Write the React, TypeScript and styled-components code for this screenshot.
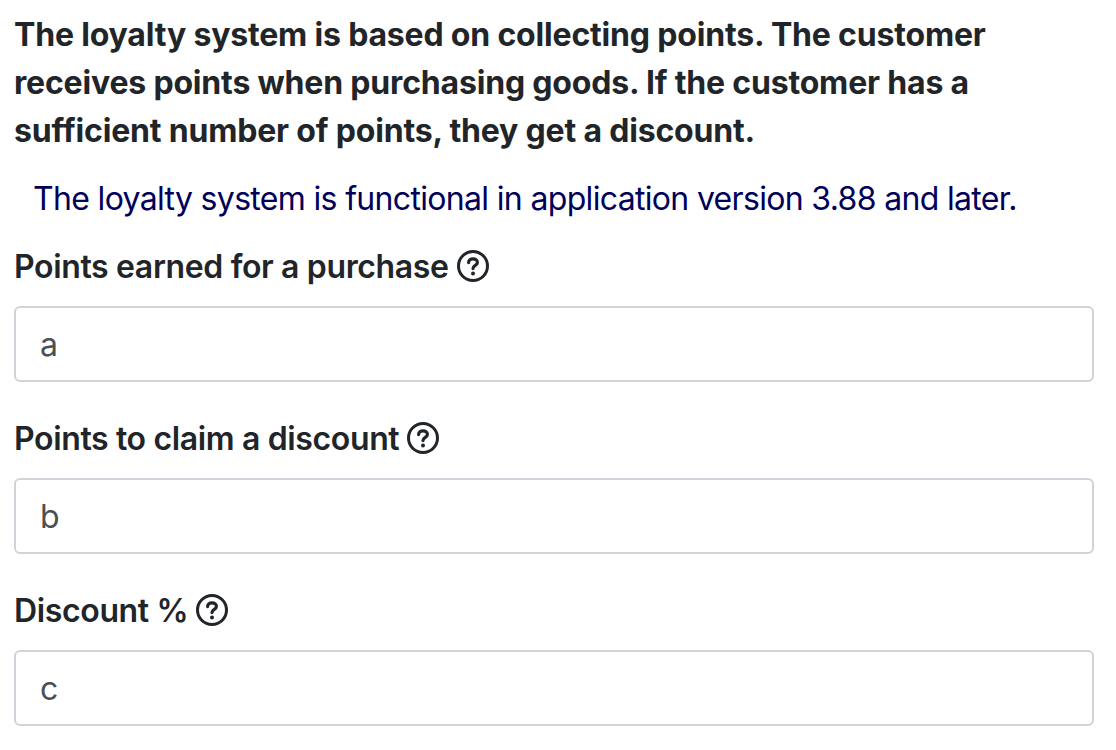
import React from "react";
import styled, { createGlobalStyle } from "styled-components";

const GlobalStyle = createGlobalStyle`
  html, body {
    margin: 0;
    padding: 0;
    background: #fff;
    font-family: Inter, "Liberation Sans", Arial, sans-serif;
    color: #212529;
  }
  * { box-sizing: border-box; }
`;

const Page = styled.div`
  width: 1116px;
  height: 750px;
  overflow: hidden;
  padding: 11px 22px 0 14px;
`;

const Intro = styled.p`
  margin: 0;
  font-size: 32px;
  line-height: 48px;
  font-weight: 700;
  letter-spacing: -0.18px;
  color: #212529;
`;

const Notice = styled.div`
  margin-top: 20px;
  padding-left: 19px;
  font-size: 32px;
  line-height: 48px;
  letter-spacing: -0.67px;
  color: #00005a;
`;

const Field = styled.div`
  margin-bottom: 32px;
`;

const Label = styled.label`
  display: flex;
  align-items: center;
  gap: 7px;
  height: 48px;
  margin-top: 19px;
  font-size: 32px;
  font-weight: 600;
  letter-spacing: -0.36px;
  color: #212529;
`;

const Input = styled.input`
  display: block;
  width: 100%;
  height: 76px;
  margin-top: 16px;
  padding: 0 24px;
  border: 2px solid #ced4da;
  border-radius: 6px;
  background: #fff;
  font-family: inherit;
  font-size: 32px;
  letter-spacing: -0.4px;
  color: #495057;
  outline: none;
`;

function HelpIcon(): JSX.Element {
  return (
    <svg width="34" height="34" viewBox="0 0 34 34" fill="none">
      <circle cx="17" cy="17" r="14.5" stroke="#212529" strokeWidth="3" />
      <path
        d="M12.6 13.6c0-2.4 2-3.7 4.4-3.7s4.4 1.3 4.4 3.5c0 3-4.4 3-4.4 6.2"
        stroke="#212529"
        strokeWidth="3.2"
        strokeLinecap="round"
      />
      <circle cx="17" cy="24.6" r="2" fill="#212529" />
    </svg>
  );
}

const fields = [
  { label: "Points earned for a purchase", value: "a" },
  { label: "Points to claim a discount", value: "b" },
  { label: "Discount %", value: "c" },
];

export default function App(): JSX.Element {
  return (
    <Page>
      <GlobalStyle />
      <Intro>
        The loyalty system is based on collecting points. The customer receives
        points when purchasing goods. If the customer has a sufficient number of
        points, they get a discount.
      </Intro>
      <Notice>The loyalty system is functional in application version 3.88 and later.</Notice>
      {fields.map((field) => (
        <Field key={field.label}>
          <Label>
            {field.label}
            <HelpIcon />
          </Label>
          <Input readOnly value={field.value} />
        </Field>
      ))}
    </Page>
  );
}
